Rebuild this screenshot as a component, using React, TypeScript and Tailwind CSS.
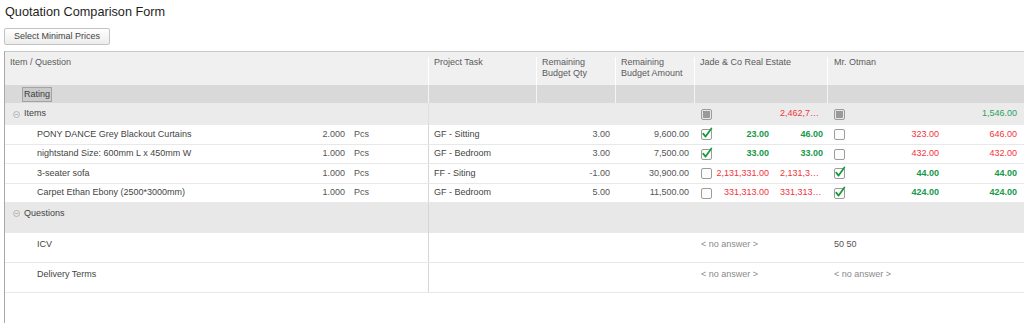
import React from "react";

type CbState = "on" | "off" | "mixed";

function Cb({ state }: { state: CbState }) {
  return (
    <svg width="11" height="11" viewBox="0 0 11 11" className="block shrink-0 overflow-visible">
      <rect
        x="0.5"
        y="0.5"
        width="10"
        height="10"
        rx="1.5"
        fill={state === "mixed" ? "#e6e6e6" : "#fcfcfc"}
        stroke="#9c9c9c"
      />
      {state === "mixed" && <rect x="2.5" y="2.5" width="6" height="6" fill="#9a9a9a" stroke="#7f7f7f" strokeWidth="0.6" />}
      {state === "on" && (
        <path d="M2.2 4.6 L4.6 7.6 L10.4 -0.6" fill="none" stroke="#17983a" strokeWidth="1.7" strokeLinecap="round" strokeLinejoin="round" />
      )}
    </svg>
  );
}

function Minus() {
  return (
    <svg width="7" height="7" viewBox="0 0 7 7" className="block shrink-0">
      <circle cx="3.5" cy="3.5" r="3" fill="none" stroke="#a8a8a8" strokeWidth="0.8" />
      <line x1="1.8" y1="3.5" x2="5.2" y2="3.5" stroke="#a8a8a8" strokeWidth="0.8" />
    </svg>
  );
}

type Offer = { state: CbState; unit: string; total: string; good: boolean };
type Item = { name: string; qty: string; task: string; rq: string; ra: string; jade: Offer; otman: Offer };

const items: Item[] = [
  {
    name: "PONY DANCE Grey Blackout Curtains",
    qty: "2.000",
    task: "GF - Sitting",
    rq: "3.00",
    ra: "9,600.00",
    jade: { state: "on", unit: "23.00", total: "46.00", good: true },
    otman: { state: "off", unit: "323.00", total: "646.00", good: false },
  },
  {
    name: "nightstand Size: 600mm L x 450mm W",
    qty: "1.000",
    task: "GF - Bedroom",
    rq: "3.00",
    ra: "7,500.00",
    jade: { state: "on", unit: "33.00", total: "33.00", good: true },
    otman: { state: "off", unit: "432.00", total: "432.00", good: false },
  },
  {
    name: "3-seater sofa",
    qty: "1.000",
    task: "FF - Siting",
    rq: "-1.00",
    ra: "30,900.00",
    jade: { state: "off", unit: "2,131,331.00", total: "2,131,331.00", good: false },
    otman: { state: "on", unit: "44.00", total: "44.00", good: true },
  },
  {
    name: "Carpet Ethan Ebony (2500*3000mm)",
    qty: "1.000",
    task: "GF - Bedroom",
    rq: "5.00",
    ra: "11,500.00",
    jade: { state: "off", unit: "331,313.00", total: "331,313.00", good: false },
    otman: { state: "on", unit: "424.00", total: "424.00", good: true },
  },
];

const heights = ["h-[20px]", "h-[19px]", "h-[20px]", "h-[19px]"];

function numCls(good: boolean) {
  return good ? "text-[#16994a] font-bold" : "text-[#f2333d]";
}

export default function App() {
  return (
    <div className="w-[1024px] h-[323px] overflow-hidden bg-white font-['Liberation_Sans',Arial,sans-serif] text-[9px] text-[#444] flex flex-col">
      <div className="h-[28px] pl-[5px] pt-[5px] text-[12.7px] leading-[15px] text-[#1e1e1e]">Quotation Comparison Form</div>
      <div className="pl-[4px]">
        <button className="h-[17px] w-[106px] rounded-[2px] border border-[#c4c4c4] bg-gradient-to-b from-white to-[#ececec] text-[9px] leading-[15px] text-[#444] text-center">
          Select Minimal Prices
        </button>
      </div>
      <div className="mt-[6px] ml-[4px] flex-1 border-l border-t border-l-[#a8a8a8] border-t-[#c9c9c9] flex flex-col">
        {/* header */}
        <div className="flex h-[33px] bg-[#f0f0f0] text-[#5a5a5a] leading-[11px] pt-[5px]">
          <div className="w-[424px] border-r border-r-white pl-[5px]">Item / Question</div>
          <div className="w-[108px] border-r border-r-white pl-[5px]">Project Task</div>
          <div className="w-[79px] border-r border-r-white pl-[5px]">
            Remaining
            <br />
            Budget Qty
          </div>
          <div className="w-[79px] border-r border-r-white pl-[5px]">
            Remaining
            <br />
            Budget Amount
          </div>
          <div className="w-[133px] border-r border-r-white pl-[5px]">Jade &amp; Co Real Estate</div>
          <div className="flex-1 pl-[6px]">Mr. Otman</div>
        </div>
        {/* rating */}
        <div className="flex h-[18px] bg-[#d9d9d9]">
          <div className="w-[424px] border-r border-r-[#f4f4f4] pl-[17px] pt-[2px]">
            <div className="w-[30px] h-[15px] border border-[#a3a3a3] bg-[#cbcbcb] text-[#3c3c3c] leading-[13px] text-center">Rating</div>
          </div>
          <div className="w-[108px] border-r border-r-[#f4f4f4]" />
          <div className="w-[79px] border-r border-r-[#f4f4f4]" />
          <div className="w-[79px] border-r border-r-[#f4f4f4]" />
          <div className="w-[133px] border-r border-r-[#f4f4f4]" />
          <div className="flex-1" />
        </div>
        {/* items group */}
        <div className="flex h-[22px] bg-[#ebebeb] items-center">
          <div className="w-[424px] h-full border-r border-r-[#e0e0e0] pl-[8px] flex items-center gap-[4px] text-[#444]">
            <Minus />
            <span>Items</span>
          </div>
          <div className="w-[108px] h-full border-r border-transparent" />
          <div className="w-[79px] h-full border-r border-transparent" />
          <div className="w-[79px] h-full border-r border-transparent" />
          <div className="w-[133px] h-full border-r border-transparent flex items-center pl-[6px]">
            <Cb state="mixed" />
            <div className="w-[57px]" />
            <div className="flex-1 min-w-0 pl-[11px] pr-[4px] text-right truncate text-[#f2333d]">2,462,723.00</div>
          </div>
          <div className="flex-1 h-full flex items-center pl-[6px]">
            <Cb state="mixed" />
            <div className="w-[94px]" />
            <div className="flex-1 min-w-0 pr-[7px] text-right truncate text-[#2ba05f]">1,546.00</div>
          </div>
        </div>
        {/* item rows */}
        {items.map((it, i) => (
          <div key={i} className={`flex ${heights[i]} border-b border-b-[#e8e8e8] items-center`}>
            <div className="w-[424px] h-full border-r border-r-[#d6d6d6] flex items-center">
              <div className="flex-1 pl-[32px] truncate">{it.name}</div>
              <div className="w-[50px] text-right text-[#555]">{it.qty}</div>
              <div className="w-[83px] pl-[9px] text-[#555]">Pcs</div>
            </div>
            <div className="w-[108px] h-full border-r border-transparent pl-[5px] flex items-center">{it.task}</div>
            <div className="w-[79px] h-full border-r border-transparent pr-[5px] flex items-center justify-end text-[#555]">{it.rq}</div>
            <div className="w-[79px] h-full border-r border-transparent pr-[5px] flex items-center justify-end text-[#555]">{it.ra}</div>
            <div className="w-[133px] h-full border-r border-transparent flex items-center pl-[6px]">
              <Cb state={it.jade.state} />
              <div className={`w-[57px] text-right whitespace-nowrap ${numCls(it.jade.good)}`}>{it.jade.unit}</div>
              <div className={`flex-1 min-w-0 pl-[11px] pr-[4px] text-right truncate ${numCls(it.jade.good)}`}>{it.jade.total}</div>
            </div>
            <div className="flex-1 h-full flex items-center pl-[6px]">
              <Cb state={it.otman.state} />
              <div className={`w-[94px] text-right whitespace-nowrap ${numCls(it.otman.good)}`}>{it.otman.unit}</div>
              <div className={`flex-1 min-w-0 pr-[7px] text-right truncate ${numCls(it.otman.good)}`}>{it.otman.total}</div>
            </div>
          </div>
        ))}
        {/* questions group */}
        <div className="flex h-[30px] bg-[#e8e8e8]">
          <div className="w-[424px] h-full border-r border-r-[#d6d6d6] pl-[8px]">
            <div className="h-[21px] flex items-center gap-[4px]">
              <Minus />
              <span>Questions</span>
            </div>
          </div>
          <div className="flex-1" />
        </div>
        {/* question rows */}
        {[
          { q: "ICV", a: "< no answer >", aGray: true, b: "50 50", bGray: false },
          { q: "Delivery Terms", a: "< no answer >", aGray: true, b: "< no answer >", bGray: true },
        ].map((r, i) => (
          <div key={i} className="flex h-[30px] border-b border-b-[#e8e8e8]">
            <div className="w-[424px] h-full border-r border-r-[#d6d6d6] pl-[32px] pt-[6px] leading-[11px]">{r.q}</div>
            <div className="w-[108px] border-r border-transparent" />
            <div className="w-[79px] border-r border-transparent" />
            <div className="w-[79px] border-r border-transparent" />
            <div className={`w-[133px] border-r border-transparent pl-[6px] pt-[6px] leading-[11px] ${r.aGray ? "text-[#8a8a8a]" : ""}`}>{r.a}</div>
            <div className={`flex-1 pl-[6px] pt-[6px] leading-[11px] ${r.bGray ? "text-[#8a8a8a]" : "text-[#555]"}`}>{r.b}</div>
          </div>
        ))}
        <div className="flex-1" />
      </div>
    </div>
  );
}
